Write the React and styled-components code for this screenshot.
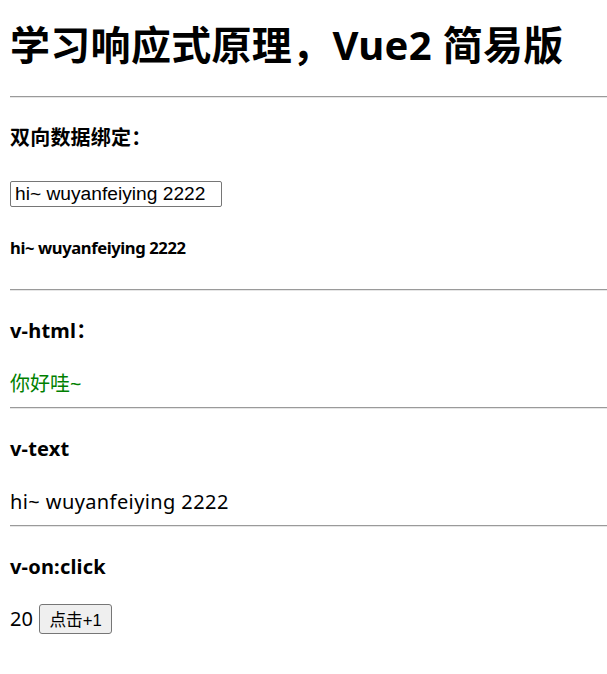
import styled, { createGlobalStyle } from "styled-components";
import { useState } from "react";

const GlobalStyle = createGlobalStyle`
  body {
    margin: 0;
    background: #fff;
    color: #000;
    font-family: "Noto Sans", "Noto Sans CJK SC", sans-serif;
  }
`;

const Page = styled.div`
  padding: 0 0 40px 10px;
  font-size: 20px;
  line-height: 26px;
  display: flow-root;
`;

const Title = styled.h1`
  margin: 19px 0 25px;
  font-size: 40px;
  line-height: 52px;
  font-weight: 700;
  letter-spacing: 0.3px;
  white-space: nowrap;
`;

const Rule = styled.hr`
  margin: 10px 0;
  height: 0;
  border: 0;
  border-top: 1px solid #9a9a9a;
  border-bottom: 1px solid #e6e6e6;
`;

const Heading = styled.h4`
  margin: 27px 0;
  font-size: 20px;
  line-height: 26px;
  font-weight: 700;
  letter-spacing: 0.2px;
`;

const InputRow = styled.div`
  display: flex;
  align-items: center;
  height: 31px;
`;

const TextInput = styled.input`
  box-sizing: border-box;
  width: 212px;
  height: 26px;
  padding: 0 4px;
  border: 1px solid #767676;
  border-radius: 2px;
  font-family: "Liberation Sans", "Noto Sans CJK SC", sans-serif;
  font-size: 19.2px;
  color: #000;
  outline: none;
`;

const Echo = styled.h5`
  margin: 28px 0 30px;
  font-size: 16.6px;
  line-height: 22px;
  font-weight: 700;
  letter-spacing: -0.4px;
`;

const Line = styled.div`
  color: ${(p) => p.$color || "#000"};
  letter-spacing: ${(p) => p.$spread || "0"};
`;

const CounterRow = styled.div`
  display: flex;
  align-items: center;
  gap: 6px;
  height: 30px;
  margin-top: -3px;
`;

const Button = styled.button`
  box-sizing: border-box;
  height: 30px;
  padding: 0 9.5px;
  border: 1px solid #767676;
  border-radius: 3px;
  background: #efefef;
  font-family: "Liberation Sans", "Noto Sans CJK SC", sans-serif;
  font-size: 16.7px;
  color: #000;
`;

export default function App() {
  const [message, setMessage] = useState("hi~ wuyanfeiying 2222");
  const [count, setCount] = useState(20);

  return (
    <Page>
      <GlobalStyle />
      <Title>学习响应式原理，Vue2 简易版</Title>
      <Rule />

      <Heading>双向数据绑定：</Heading>
      <InputRow>
        <TextInput value={message} onChange={(e) => setMessage(e.target.value)} />
      </InputRow>
      <Echo>{message}</Echo>
      <Rule />

      <Heading>v-html：</Heading>
      <Line $color="#008000">你好哇~</Line>
      <Rule />

      <Heading>v-text</Heading>
      <Line $spread="0.4px">{message}</Line>
      <Rule />

      <Heading>v-on:click</Heading>
      <CounterRow>
        <span>{count}</span>
        <Button onClick={() => setCount(count + 1)}>点击+1</Button>
      </CounterRow>
    </Page>
  );
}
